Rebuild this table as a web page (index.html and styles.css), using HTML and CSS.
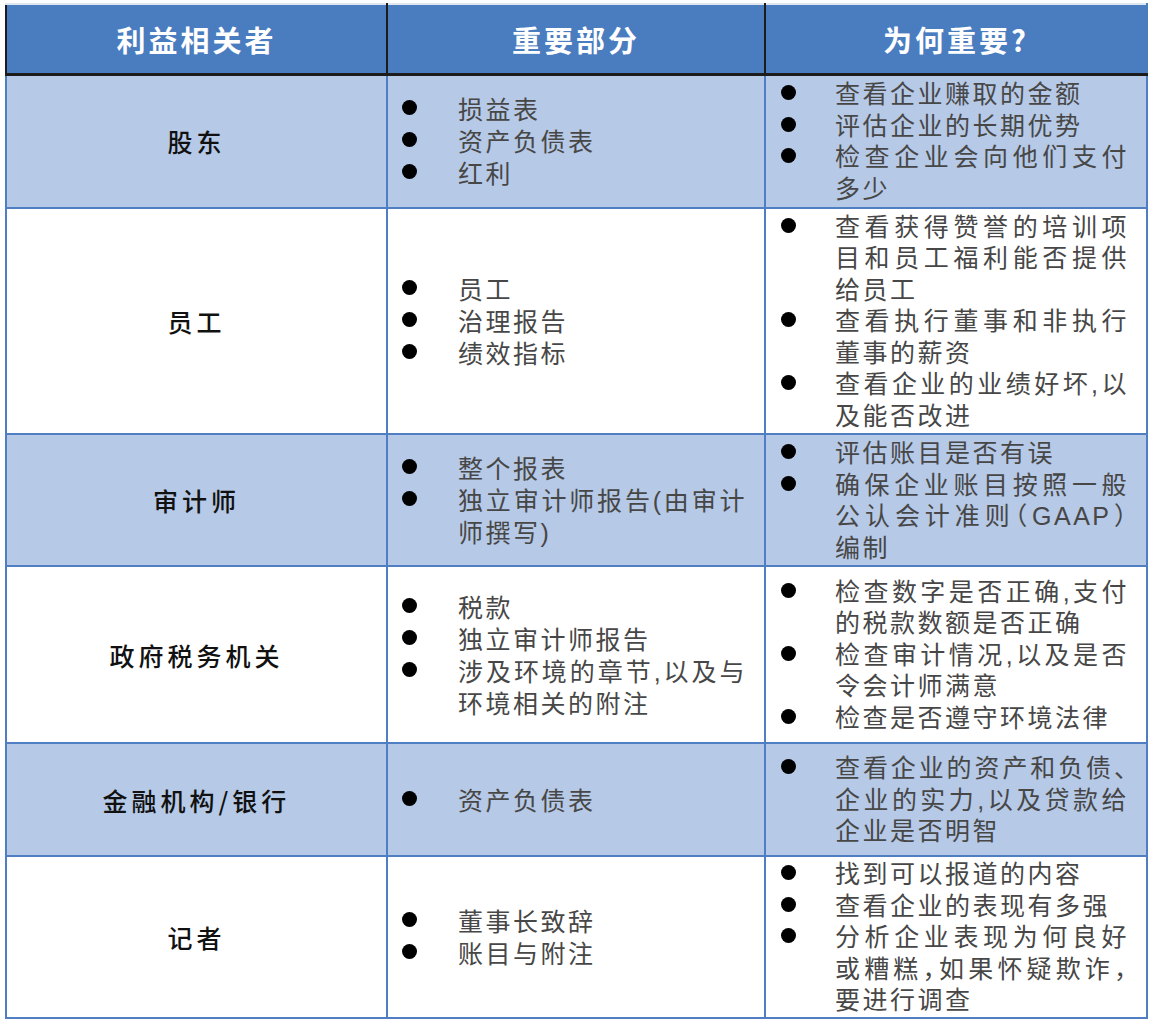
FILE: index.html
```html
<!DOCTYPE html>
<html lang="zh-CN">
<head>
<meta charset="utf-8">
<title>利益相关者</title>
<link rel="stylesheet" href="styles.css">
</head>
<body>
<table class="st">
  <colgroup><col class="c1"><col class="c2"><col class="c3"></colgroup>
  <thead>
    <tr class="hd"><th>利益相关者</th><th>重要部分</th><th class="last">为何重要?</th></tr>
  </thead>
  <tbody>
    <tr class="r1 alt">
      <td class="who">股东</td>
      <td class="parts"><ul class="list"><li>损益表</li><li>资产负债表</li><li>红利</li></ul></td>
      <td class="why"><ul class="list"><li>查看企业赚取的金额</li><li>评估企业的长期优势</li><li>检查企业会向他们支付多少</li></ul></td>
    </tr>
    <tr class="r2">
      <td class="who">员工</td>
      <td class="parts"><ul class="list"><li>员工</li><li>治理报告</li><li>绩效指标</li></ul></td>
      <td class="why"><ul class="list"><li>查看获得赞誉的培训项目和员工福利能否提供给员工</li><li>查看执行董事和非执行董事的薪资</li><li>查看企业的业绩好坏,以及能否改进</li></ul></td>
    </tr>
    <tr class="r3 alt">
      <td class="who">审计师</td>
      <td class="parts"><ul class="list"><li>整个报表</li><li>独立审计师报告(由审计师撰写)</li></ul></td>
      <td class="why"><ul class="list"><li>评估账目是否有误</li><li>确保企业账目按照一般公认会计准则（GAAP）编制</li></ul></td>
    </tr>
    <tr class="r4">
      <td class="who">政府税务机关</td>
      <td class="parts"><ul class="list"><li>税款</li><li>独立审计师报告</li><li>涉及环境的章节,以及与环境相关的附注</li></ul></td>
      <td class="why"><ul class="list"><li>检查数字是否正确,支付的税款数额是否正确</li><li>检查审计情况,以及是否令会计师满意</li><li>检查是否遵守环境法律</li></ul></td>
    </tr>
    <tr class="r5 alt">
      <td class="who">金融机构/银行</td>
      <td class="parts"><ul class="list"><li>资产负债表</li></ul></td>
      <td class="why"><ul class="list"><li>查看企业的资产和负债、企业的实力,以及贷款给企业是否明智</li></ul></td>
    </tr>
    <tr class="r6">
      <td class="who">记者</td>
      <td class="parts"><ul class="list"><li>董事长致辞</li><li>账目与附注</li></ul></td>
      <td class="why"><ul class="list"><li>找到可以报道的内容</li><li>查看企业的表现有多强</li><li>分析企业表现为何良好或糟糕，如果怀疑欺诈，要进行调查</li></ul></td>
    </tr>
  </tbody>
</table>
</body>
</html>
```

FILE: styles.css
```css
html, body {
  margin: 0;
  background: #ffffff;
}

body {
  font-family: "Noto Sans CJK SC", "Noto Sans", sans-serif;
}

.st {
  border-collapse: collapse;
  table-layout: fixed;
  width: 1141px;
  margin: 3px 0 0 5px;
}

.c1 { width: 381px; }
.c2 { width: 378px; }
.c3 { width: 382px; }

.hd { height: 70px; }
.r1 { height: 134px; }
.r2 { height: 226px; }
.r3 { height: 132px; }
.r4 { height: 177px; }
.r5 { height: 113px; }
.r6 { height: 162px; }

.st th {
  background: #4a7cc0;
  color: #ffffff;
  font-size: 29px;
  font-weight: 700;
  letter-spacing: 3px;
  text-align: center;
  vertical-align: middle;
  padding: 0;
  border: 2px solid #1c1c1c;
  border-top: 2px solid #dfe6ef;
  border-bottom: 3px solid #1c1c1c;
}

.st th.last {
  border-right: 2px solid #4a7cc0;
}

.st td {
  border: 2px solid #4f7ec2;
  vertical-align: middle;
  padding: 0;
  background: #ffffff;
}

.st .alt td {
  background: #b6c9e6;
}

.who {
  text-align: center;
  font-size: 25px;
  letter-spacing: 4px;
  color: #111111;
  font-weight: 500;
}

.parts {
  padding: 0 17px 0 14px !important;
}

.why {
  padding: 0 17px 0 15px !important;
}

.list {
  list-style: none;
  margin: 0;
  padding: 2px 0 0 0;
  font-family: "Liberation Sans", "Noto Sans CJK SC", sans-serif;
  font-size: 25px;
  line-height: 32px;
  letter-spacing: 2.5px;
  color: #474747;
  text-align: justify;
}

.why .list {
  line-height: 31.5px;
  font-feature-settings: "halt";
}

.list li {
  display: grid;
  grid-template-columns: 56px 1fr;
}

.why .list li {
  grid-template-columns: 54px 1fr;
}

.list li::before {
  content: "";
  width: 15px;
  height: 15px;
  border-radius: 50%;
  background: #000000;
  margin-top: 6px;
}
```
